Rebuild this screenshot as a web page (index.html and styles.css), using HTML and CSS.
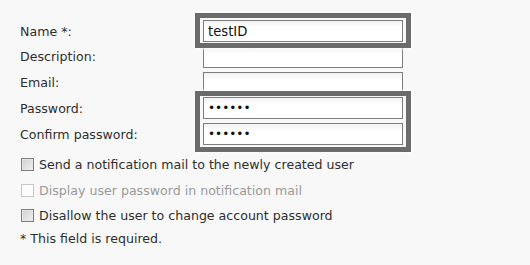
FILE: index.html
```html
<!DOCTYPE html>
<html>
<head>
<meta charset="utf-8">
<link rel="stylesheet" href="styles.css">
</head>
<body>
<div class="form">
  <div class="fields">
    <label class="lbl" for="f-name">Name *:</label>
    <input class="txt" id="f-name" type="text" value="testID">
    <label class="lbl" for="f-desc">Description:</label>
    <input class="txt" id="f-desc" type="text">
    <label class="lbl" for="f-email">Email:</label>
    <input class="txt" id="f-email" type="text">
    <label class="lbl" for="f-pw">Password:</label>
    <input class="txt pw" id="f-pw" type="password" value="secret">
    <label class="lbl" for="f-pw2">Confirm password:</label>
    <input class="txt pw" id="f-pw2" type="password" value="secret">
  </div>
  <div class="checks">
    <label class="chk"><input type="checkbox" class="box"><span>Send a notification mail to the newly created user</span></label>
    <label class="chk disabled"><input type="checkbox" class="box" disabled><span>Display user password in notification mail</span></label>
    <label class="chk"><input type="checkbox" class="box"><span>Disallow the user to change account password</span></label>
  </div>
  <p class="note">* This field is required.</p>
  <div class="frame frame-name"></div>
  <div class="frame frame-pw"></div>
</div>
</body>
</html>
```

FILE: styles.css
```css
html, body {
  margin: 0;
  padding: 0;
  background: #f8f8f8;
}
body {
  font-family: "DejaVu Sans", Verdana, sans-serif;
  font-size: 12.6px;
  color: #2e2e2e;
}
.form {
  position: relative;
  padding: 20px 0 0 20px;
}
.fields {
  display: grid;
  grid-template-columns: 183px 200px;
  grid-auto-rows: 22px;
  row-gap: 3.75px;
}
.lbl {
  display: flex;
  align-items: center;
}
.txt {
  box-sizing: border-box;
  width: 200px;
  height: 22px;
  margin: 0;
  border: 1px solid #7d7d7d;
  background: linear-gradient(#f2f2f2, #ffffff 35%);
  font-family: "DejaVu Sans", Verdana, sans-serif;
  font-size: 13.2px;
  color: #111;
  padding: 0 4px;
  outline: none;
}
.pw {
  font-size: 12px;
}
.checks {
  display: flex;
  flex-direction: column;
  margin-top: 6.6px;
}
.chk {
  display: flex;
  align-items: center;
  height: 25.75px;
}
.box {
  appearance: none;
  -webkit-appearance: none;
  box-sizing: border-box;
  width: 13px;
  height: 13px;
  margin: 0 5px 0 1px;
  border: 1px solid #7f7f7f;
  background: linear-gradient(135deg, #cfcfcf, #f1f1f1);
  box-shadow: inset 0 0 0 1px #e6e6e6;
}
.disabled {
  color: #9a9a9a;
}
.disabled .box {
  border-color: #c8c8c8;
  background: #fbfbfb;
  box-shadow: none;
}
.note {
  margin: 0;
  line-height: 19px;
}
.frame {
  position: absolute;
  left: 195px;
  width: 216px;
  box-sizing: border-box;
  border: 5px solid #6b6b6b;
  box-shadow: 0 0 2px 1px rgba(255,255,255,0.9);
  pointer-events: none;
}
.frame-name {
  top: 13px;
  height: 35px;
}
.frame-pw {
  top: 91px;
  height: 61px;
}
```
